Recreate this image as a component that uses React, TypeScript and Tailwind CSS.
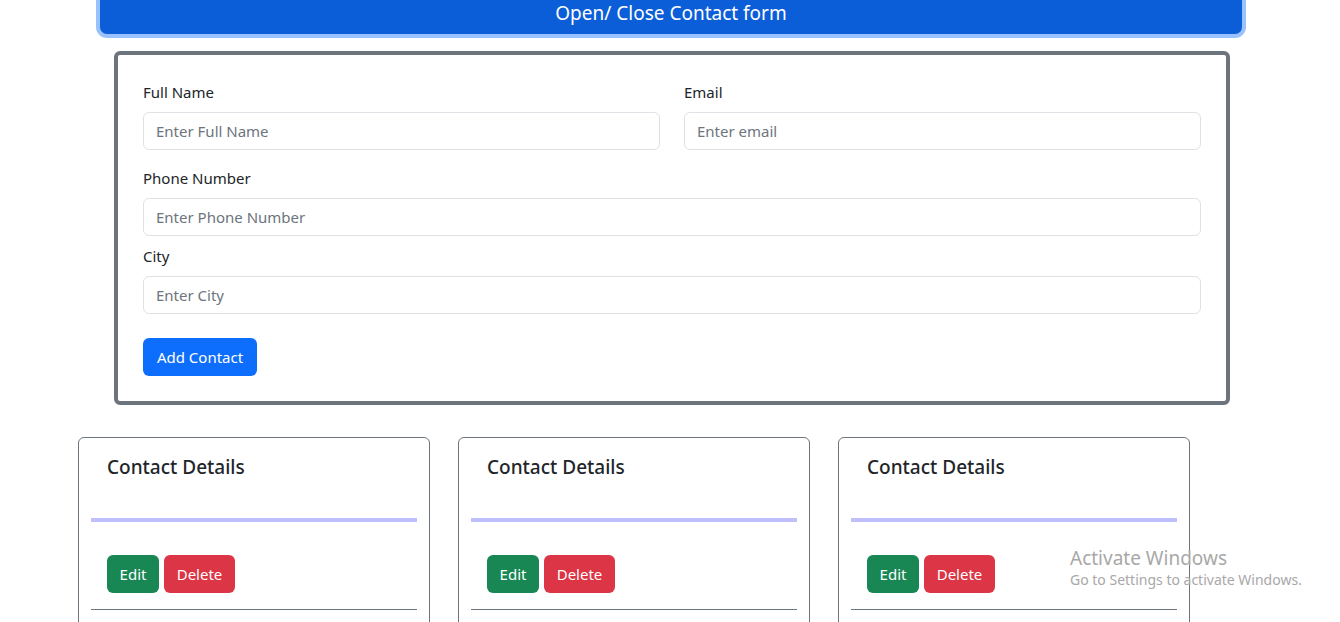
import React from "react";

const font = { fontFamily: '"Segoe UI", "Noto Sans", sans-serif' };

function Field({ label, placeholder, className = "" }: { label: string; placeholder: string; className?: string }) {
  return (
    <div className={className}>
      <label className="block h-[24px] leading-[24px] text-[15px] text-[#212529]">{label}</label>
      <input
        className="mt-[8px] block h-[38px] w-full rounded-[6px] border border-[#dee2e6] bg-white px-[12px] text-[15px] text-[#212529] placeholder:text-[#6c757d] outline-none"
        placeholder={placeholder}
      />
    </div>
  );
}

function Card() {
  return (
    <div className="w-[352px] h-[200px] rounded-[6px] border border-[#6c757d] bg-white px-[12px]">
      <div className="pt-[17px] pl-[16px] h-[24px] box-content text-[19px] leading-[24px] font-medium text-[#212529]">Contact Details</div>
      <div className="mt-[39px] h-[4px] bg-[#c0bffd]" />
      <div className="mt-[33px] flex gap-[5px] pl-[16px]">
        <button className="h-[38px] w-[52px] rounded-[6px] bg-[#198754] text-[15px] text-white">Edit</button>
        <button className="h-[38px] w-[71px] rounded-[6px] bg-[#dc3545] text-[15px] text-white">Delete</button>
      </div>
      <div className="mt-[16px] h-px bg-[#6c757d]" />
    </div>
  );
}

export default function App() {
  return (
    <div className="relative h-[622px] w-[1340px] overflow-hidden bg-white" style={font}>
      <div className="-mt-[8px] ml-[100px] w-[1142px]">
        <button className="h-[42px] w-full rounded-b-[7px] bg-[#0b5ed7] text-[19px] leading-[30px] text-white shadow-[0_0_0_4px_#98c1fe]">
          Open/ Close Contact form
        </button>
      </div>
      <div className="ml-[114px] mt-[17px] h-[354px] w-[1116px] rounded-[6px] border-4 border-[#6c757d] px-[25px] pt-[25px]">
        <div className="flex gap-[24px]">
          <Field className="flex-1" label="Full Name" placeholder="Enter Full Name" />
          <Field className="flex-1" label="Email" placeholder="Enter email" />
        </div>
        <Field className="mt-[16px]" label="Phone Number" placeholder="Enter Phone Number" />
        <Field className="mt-[8px]" label="City" placeholder="Enter City" />
        <button className="mt-[24px] h-[38px] w-[114px] rounded-[6px] bg-[#0d6efd] text-[15px] text-white">Add Contact</button>
      </div>
      <div className="ml-[78px] mt-[32px] flex gap-[28px]">
        <Card />
        <Card />
        <Card />
      </div>
      <div className="absolute left-[1070px] top-[546px] text-[#a8a8a8]">
        <div className="text-[19px] leading-[24px]">Activate Windows</div>
        <div className="text-[14px] leading-[18px] mt-[1px]">Go to Settings to activate Windows.</div>
      </div>
    </div>
  );
}
